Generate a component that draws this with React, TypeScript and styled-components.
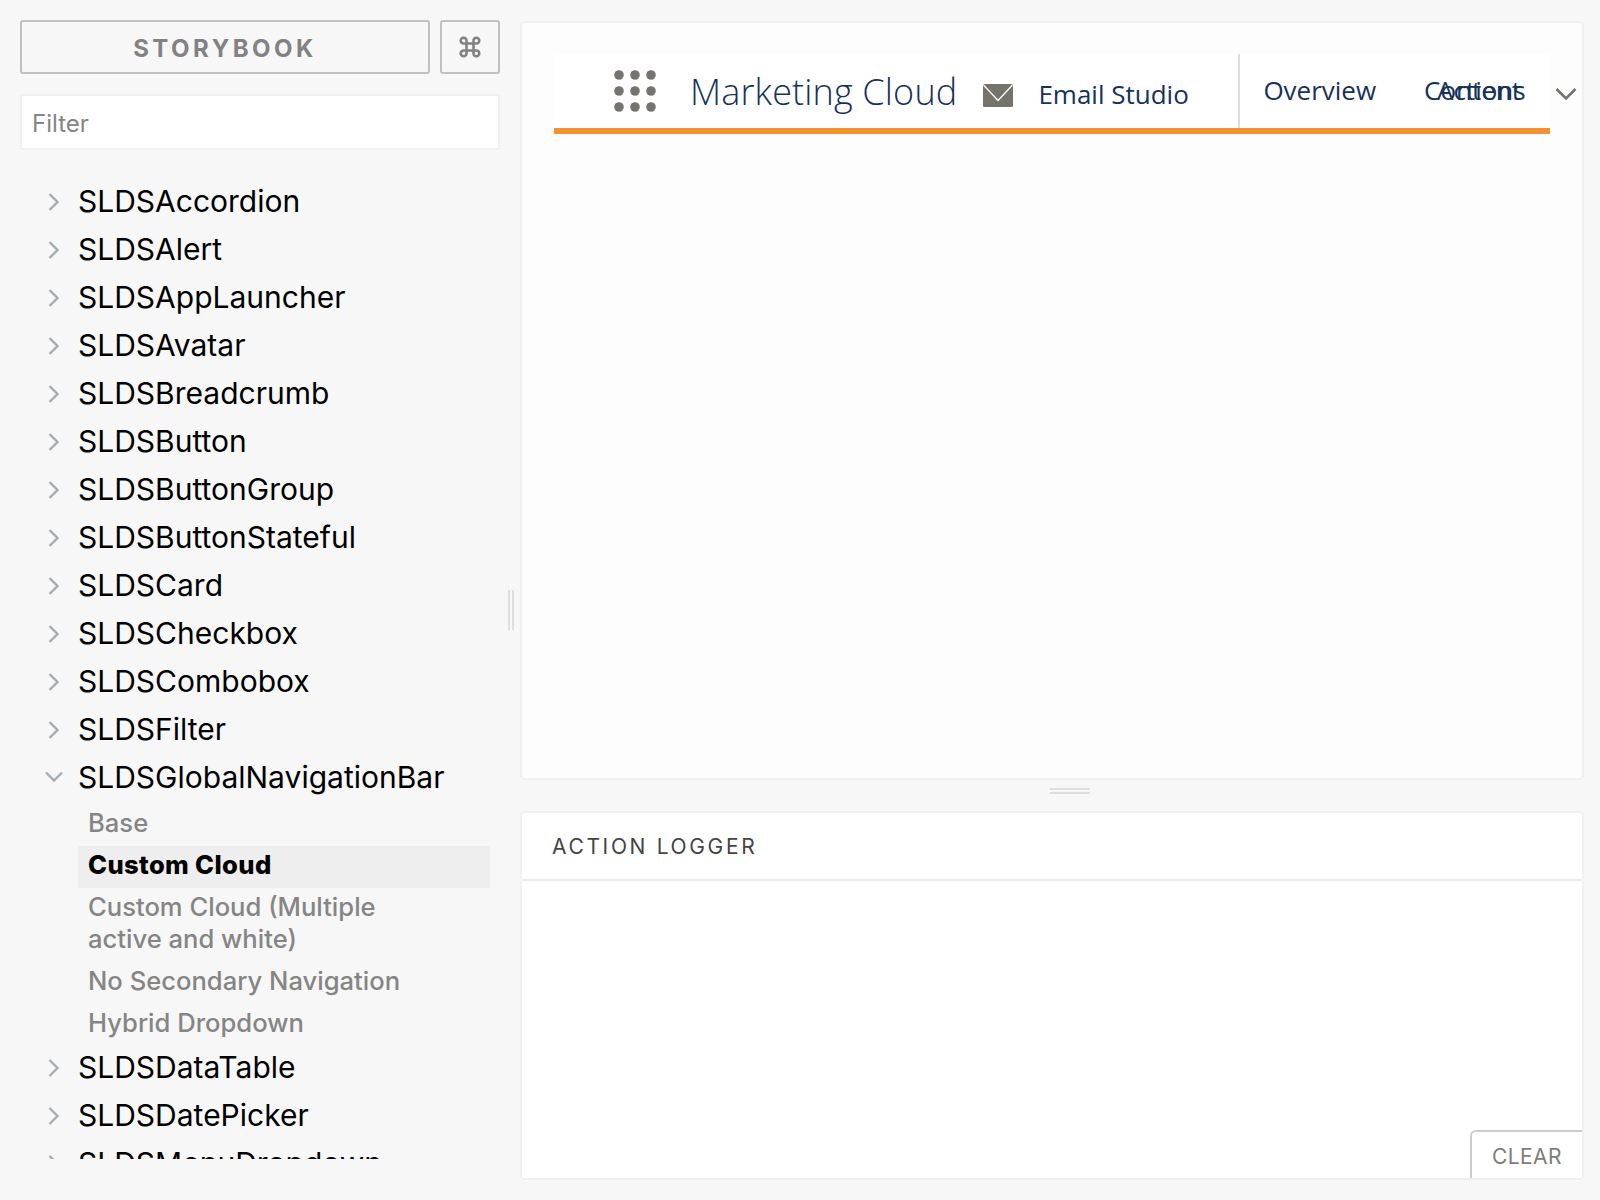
import React from 'react';
import styled, { createGlobalStyle } from 'styled-components';

const Global = createGlobalStyle`
  html, body { margin: 0; padding: 0; background: #f7f7f7; }
  body { font-family: Inter, "Liberation Sans", sans-serif; }
  * { box-sizing: border-box; }
`;

const Page = styled.div`
  width: 1600px;
  height: 1200px;
  display: flex;
  background: #f7f7f7;
  overflow: hidden;
`;

const Sidebar = styled.aside`
  width: 520px;
  height: 1200px;
  flex: none;
  padding: 20px 0 0 20px;
  display: flex;
  flex-direction: column;
  position: relative;
`;

const HeaderRow = styled.div`
  display: flex;
  gap: 10px;
  width: 480px;
`;

const BrandButton = styled.div`
  width: 410px;
  height: 54px;
  padding-top: 2px;
  border: 2px solid #c1c1c1;
  border-radius: 3px;
  display: flex;
  align-items: center;
  justify-content: center;
  font-size: 24px;
  font-weight: 700;
  letter-spacing: 3.5px;
  color: #828282;
`;

const ShortcutButton = styled.div`
  width: 60px;
  height: 54px;
  border: 2px solid #c1c1c1;
  border-radius: 3px;
  display: flex;
  align-items: center;
  justify-content: center;
  color: #828282;
`;

const FilterBox = styled.div`
  width: 480px;
  height: 56px;
  margin-top: 20px;
  background: #fff;
  border: 2px solid #f0f0f0;
  border-radius: 2px;
  padding: 2px 10px 0;
  display: flex;
  align-items: center;
  font-size: 24px;
  color: #858585;
`;

const Tree = styled.div`
  margin-top: 27px;
  height: 982px;
  width: 490px;
  overflow: hidden;
  display: flex;
  flex-direction: column;
`;

const Row = styled.div`
  height: 48px;
  flex: none;
  display: flex;
  align-items: center;
  color: #000;
  font-size: 30px;
  line-height: 48px;
`;

const Caret = styled.span<{ $open?: boolean }>`
  width: 58px;
  padding: ${p => (p.$open ? '0 0 0 24px' : '2px 0 0 28px')};
  flex: none;
  display: flex;
  align-items: center;
`;

const SubList = styled.div`
  margin: 3px 0 -3px 58px;
  width: 412px;
  display: flex;
  flex-direction: column;
`;

const SubItem = styled.div<{ $active?: boolean }>`
  padding: 3px 80px 7px 10px;
  font-size: 25.6px;
  line-height: 32px;
  color: ${p => (p.$active ? '#000' : '#858585')};
  font-weight: ${p => (p.$active ? 800 : 500)};
  letter-spacing: ${p => (p.$active ? '0.35px' : '0')};
  background: ${p => (p.$active ? '#eeeeee' : 'transparent')};
`;

const DragHandle = styled.div`
  position: absolute;
  top: 590px;
  left: 508px;
  width: 6px;
  height: 40px;
  border-left: 2px solid #dedede;
  border-right: 2px solid #dedede;
`;

const Main = styled.main`
  flex: 1;
  min-width: 0;
  padding: 21px 16px 20px 0;
  display: flex;
  flex-direction: column;
`;

const Preview = styled.section`
  height: 759px;
  flex: none;
  background: #fdfdfd;
  border: 2px solid #f0f0f0;
  border-radius: 5px;
  padding: 31px 31px 0 32px;
`;

const Nav = styled.nav`
  width: 996px;
  height: 80px;
  background: #fff;
  border-bottom: 6px solid #f59331;
  display: flex;
  position: relative;
  color: #16325c;
`;

const Launcher = styled.div`
  margin: 16px 0 0 60px;
  display: block;
  width: 42px;
  height: 42px;
`;

const CloudName = styled.div`
  margin: 13.5px 0 0 34px;
  font-family: "Open Sans", sans-serif;
  font-weight: 300;
  font-size: 36px;
  line-height: 48px;
  letter-spacing: 0.15px;
  white-space: nowrap;
`;

const Mail = styled.div`
  margin: 30px 0 0 26px;
  width: 30px;
  height: 24px;
`;

const Studio = styled.div`
  margin: 23px 0 0 25px;
  width: 200px;
  font-family: "Open Sans", sans-serif;
  font-size: 26px;
  font-weight: 500;
  line-height: 34px;
  white-space: nowrap;
`;

const Divider = styled.div`
  width: 2px;
  height: 74px;
  background: #dcdcdc;
`;

const NavLink = styled.div`
  font-family: "Open Sans", sans-serif;
  font-size: 26px;
  line-height: 34px;
  white-space: nowrap;
  margin: 19px 0 0 23px;
  width: 160px;
`;

const OverlapLink = styled.span<{ $left: number }>`
  position: absolute;
  left: ${p => p.$left}px;
  top: 19px;
  font-family: "Open Sans", sans-serif;
  font-size: 26px;
  line-height: 34px;
  white-space: nowrap;
`;

const MoreCaret = styled.span`
  position: absolute;
  left: 1001px;
  top: 33px;
  display: block;
  line-height: 0;
`;

const Resizer = styled.div`
  height: 31px;
  flex: none;
  padding: 8px 0 0 36px;
  display: flex;
  align-items: flex-start;
  justify-content: center;
`;

const Grip = styled.div`
  width: 40px;
  height: 6px;
  border-top: 2px solid #dedede;
  border-bottom: 2px solid #dedede;
`;

const Logger = styled.section`
  flex: 1;
  background: #fff;
  border: 2px solid #f0f0f0;
  border-radius: 5px;
  position: relative;
  overflow: hidden;
`;

const LoggerHead = styled.header`
  height: 68px;
  padding: 1px 0 0 30px;
  border-bottom: 2px solid #ececec;
  display: flex;
  align-items: center;
  font-size: 21px;
  letter-spacing: 2.65px;
  color: #444;
`;

const ClearButton = styled.div`
  position: absolute;
  right: 0;
  bottom: 0;
  width: 112px;
  height: 48px;
  border: 2px solid #ccc;
  border-right: 0;
  border-bottom: 0;
  border-top-left-radius: 6px;
  display: flex;
  align-items: center;
  padding: 2px 0 0 20px;
  font-size: 21px;
  letter-spacing: 0.4px;
  color: #7d7d7d;
`;

const ChevronRight = () => (
  <svg width="12" height="20" viewBox="0 0 12 20" fill="none" stroke="#a4adb3" strokeWidth="2.4">
    <path d="M1.5 2 L9.5 10 L1.5 18" />
  </svg>
);

const ChevronDown = () => (
  <svg width="20" height="12" viewBox="0 0 20 12" fill="none" stroke="#a4adb3" strokeWidth="2.4">
    <path d="M2 1.5 L10 9.5 L18 1.5" />
  </svg>
);

const CommandIcon = () => (
  <svg width="22" height="22" viewBox="0 0 22 22" fill="none" stroke="#828282" strokeWidth="2.6">
    <path d="M7.5 7.5 H14.5 V14.5 H7.5 Z M7.5 7.5 H4.8 A2.9 2.9 0 1 1 7.5 4.8 Z M14.5 7.5 V4.8 A2.9 2.9 0 1 1 17.2 7.5 Z M14.5 14.5 H17.2 A2.9 2.9 0 1 1 14.5 17.2 Z M7.5 14.5 V17.2 A2.9 2.9 0 1 1 4.8 14.5 Z" />
  </svg>
);

const top = ['SLDSAccordion', 'SLDSAlert', 'SLDSAppLauncher', 'SLDSAvatar', 'SLDSBreadcrumb', 'SLDSButton', 'SLDSButtonGroup', 'SLDSButtonStateful', 'SLDSCard', 'SLDSCheckbox', 'SLDSCombobox', 'SLDSFilter'];
const bottom = ['SLDSDataTable', 'SLDSDatePicker', 'SLDSMenuDropdown'];
const subs = ['Base', 'Custom Cloud', 'Custom Cloud (Multiple active and white)', 'No Secondary Navigation', 'Hybrid Dropdown'];

const Closed = ({ name }: { name: string }) => (
  <Row>
    <Caret><ChevronRight /></Caret>
    {name}
  </Row>
);

export default function App() {
  return (
    <Page>
      <Global />
      <Sidebar>
        <HeaderRow>
          <BrandButton>STORYBOOK</BrandButton>
          <ShortcutButton><CommandIcon /></ShortcutButton>
        </HeaderRow>
        <FilterBox>Filter</FilterBox>
        <Tree>
          {top.map(n => <Closed key={n} name={n} />)}
          <Row>
            <Caret $open><ChevronDown /></Caret>
            SLDSGlobalNavigationBar
          </Row>
          <SubList>
            {subs.map(s => <SubItem key={s} $active={s === 'Custom Cloud'}>{s}</SubItem>)}
          </SubList>
          {bottom.map(n => <Closed key={n} name={n} />)}
        </Tree>
        <DragHandle />
      </Sidebar>
      <Main>
        <Preview>
          <Nav>
            <Launcher>
              <svg width="42" height="42" viewBox="0 0 42 42" fill="#76736d">
                {[5, 21, 37].flatMap(y => [5, 21, 37].map(x => <circle key={`${x}-${y}`} cx={x} cy={y} r="4.8" />))}
              </svg>
            </Launcher>
            <CloudName>Marketing Cloud</CloudName>
            <Mail>
              <svg width="30" height="24" viewBox="0 0 30 24">
                <rect x="0" y="0" width="30" height="23" rx="1.5" fill="#76736d" />
                <path d="M0.5 1 L15 16.5 L29.5 1" fill="none" stroke="#fff" strokeWidth="1.3" />
              </svg>
            </Mail>
            <Studio>Email Studio</Studio>
            <Divider />
            <NavLink>Overview</NavLink>
            <OverlapLink $left={870}>Content</OverlapLink>
            <OverlapLink $left={883}>Actions</OverlapLink>
            <MoreCaret>
              <svg width="22" height="14" viewBox="0 0 22 14" fill="none" stroke="#76736d" strokeWidth="2.6">
                <path d="M1.5 2 L11 11.5 L20.5 2" />
              </svg>
            </MoreCaret>
          </Nav>
        </Preview>
        <Resizer><Grip /></Resizer>
        <Logger>
          <LoggerHead>ACTION LOGGER</LoggerHead>
          <ClearButton>CLEAR</ClearButton>
        </Logger>
      </Main>
    </Page>
  );
}
